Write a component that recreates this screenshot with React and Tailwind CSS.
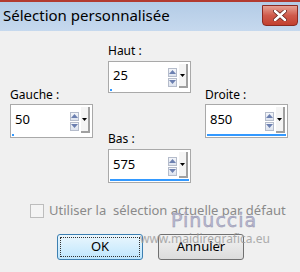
import React from 'react';

function Arrow({ dir }) {
  return (
    <div className="w-[9px] h-[9px] border border-[#b5bccb] bg-gradient-to-b from-[#f4f6fa] to-[#dde3ee] flex items-center justify-center">
      <svg width="7" height="4" viewBox="0 0 7 4">
        {dir === 'up' ? <path d="M0 4 L3.5 0 L7 4 Z" fill="#6b7fb0" /> : <path d="M0 0 L3.5 4 L7 0 Z" fill="#6b7fb0" />}
      </svg>
    </div>
  );
}

function Spin({ value, fill, h }) {
  return (
    <div className={`w-[83px] ${h} border border-[#a9a9a9] bg-white flex flex-col`}>
      <div className="flex flex-1 pt-[2px]">
        <div className="flex-1 pl-[4px] flex items-center text-[13px] text-black">{value}</div>
        <div className="flex flex-col justify-center gap-[1px] pt-[2px]">
          <Arrow dir="up" />
          <Arrow dir="down" />
        </div>
        <div className="ml-[2px] mr-[2px] w-[9px] bg-[#f4f4f4] border-r-2 border-b-2 border-[#a0a0a0] flex items-center justify-center">
          <svg width="5" height="3" viewBox="0 0 5 3"><path d="M0 0 L5 0 L2.5 3 Z" fill="#000" /></svg>
        </div>
      </div>
      <div className="h-[4px] px-[1px] pb-[1px] pt-[1px]">
        <div className={`h-[2px] bg-[#3399ff] ${fill}`} />
      </div>
    </div>
  );
}

export default function App() {
  return (
    <div className="w-[300px] h-[272px] bg-[#f0f0f0] flex flex-col relative overflow-hidden" style={{ fontFamily: '"Noto Sans", "Open Sans", sans-serif' }}>
      <div className="h-[31px] bg-gradient-to-b from-[#b3cbe6] to-[#c6d9ee] border-t-2 border-[#b23a2f] flex items-start justify-between">
        <div className="pl-[3px] pt-[3px] text-[15px] leading-[21px] text-black">Sélection personnalisée</div>
        <div className="mt-[3px] mr-[2px] w-[36px] h-[21px] rounded-b-[4px] border border-[#8a2a22] bg-gradient-to-b from-[#e5a195] via-[#cf5a4b] to-[#c2402f] flex items-center justify-center">
          <svg width="14" height="11" viewBox="0 0 14 11">
            <path d="M2 1 L12 10 M12 1 L2 10" stroke="#5a1a14" strokeWidth="4" strokeLinecap="round" />
            <path d="M2 1 L12 10 M12 1 L2 10" stroke="#fff" strokeWidth="2.6" strokeLinecap="round" />
          </svg>
        </div>
      </div>

      <div className="flex px-[10px] gap-[14px]">
        <div className="pt-[56px] flex flex-col">
          <div className="text-[12px] h-[16px] leading-[16px] text-black mb-[1px]">Gauche :</div>
          <Spin value="50" fill="w-[2px]" h="h-[34px]" />
        </div>
        <div className="pt-[12px] ml-[1px] flex flex-col">
          <div className="text-[12px] h-[16px] leading-[16px] text-black mb-[2px]">Haut :</div>
          <Spin value="25" fill="w-[2px]" h="h-[32px]" />
          <div className="text-[12px] h-[16px] leading-[16px] text-black mt-[38px] mb-[2px]">Bas :</div>
          <Spin value="575" fill="w-full" h="h-[34px]" />
        </div>
        <div className="pt-[56px] flex flex-col">
          <div className="text-[12px] h-[16px] leading-[16px] text-black mb-[1px]">Droite :</div>
          <Spin value="850" fill="w-full" h="h-[34px]" />
        </div>
      </div>

      <div className="flex items-center pl-[30px] mt-[18px] gap-[5px]">
        <div className="w-[14px] h-[14px] border border-[#bdbdbd] bg-[#f4f4f4]" />
        <div className="text-[13px] text-[#8a8a8a] whitespace-pre">Utiliser la  sélection actuelle par défaut</div>
      </div>

      <div className="flex pl-[57px] gap-[15px] mt-[13px]">
        <div className="w-[86px] h-[26px] rounded-[3px] border border-[#3c7fb1] bg-gradient-to-b from-[#eaf6fd] to-[#bee6fd] p-[2px]">
          <div className="w-full h-full border border-dotted border-[#333] flex items-center justify-center text-[13px] text-black">OK</div>
        </div>
        <div className="w-[86px] h-[26px] rounded-[3px] border border-[#707070] bg-gradient-to-b from-[#f2f2f2] to-[#dcdcdc] flex items-center justify-center text-[13px] text-black">Annuler</div>
      </div>

      <div className="absolute left-[171px] top-[211px] text-[19px] tracking-[1px] text-[#b8b8d0] leading-none" style={{ fontFamily: '"DejaVu Sans", sans-serif', WebkitTextStroke: '0.4px #8e8ea8' }}>Pinuccia</div>
      <div className="absolute left-[140px] top-[233px] text-[12px] text-[#9a9a9a] leading-none opacity-80">www.maidiregrafica.eu</div>
    </div>
  );
}
